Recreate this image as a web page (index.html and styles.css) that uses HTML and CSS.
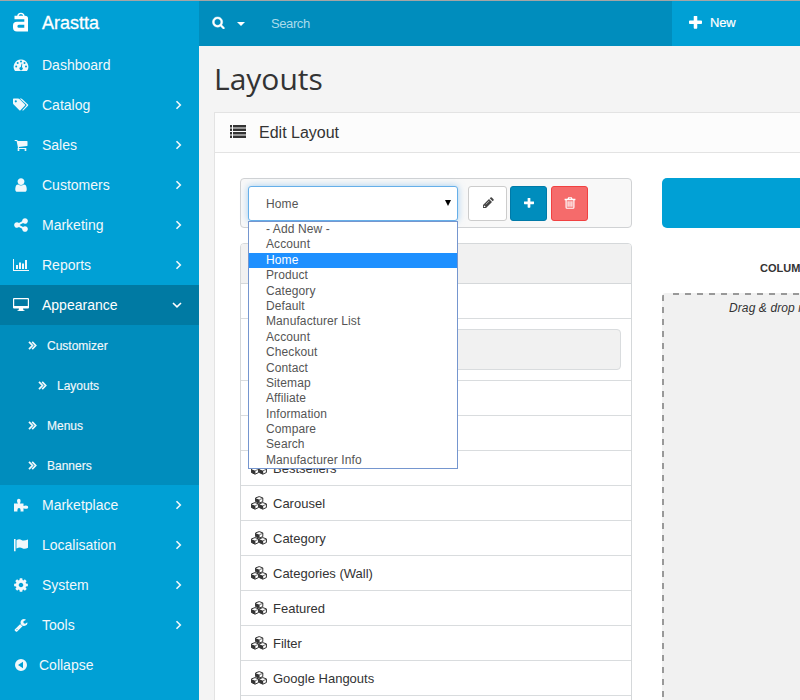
FILE: index.html
```html
<!DOCTYPE html>
<html lang="en">
<head>
<meta charset="utf-8">
<title>Layouts</title>
<link rel="stylesheet" href="styles.css">
</head>
<body>
<svg class="defs" aria-hidden="true">
<symbol id="brand" viewBox="0 0 18 20"><path d="M5.800 4.500C6 .3 11.800 .3 12 4.500" fill="none" stroke="currentColor" stroke-width="1.300"/><path d="M2.500 3.800H13Q16 3.800 16 6.500V19.500H5Q1 19.500 1 15.500V13.500Q1 9.800 5 9.800H12.300V7.200H2.500ZM6.800 12.800Q5.400 12.800 5.400 14.300T6.800 15.800H12.300V12.800Z" fill-rule="evenodd"/></symbol>
<symbol id="dash" viewBox="0 0 16 16"><path fill-rule="evenodd" d="M8 2.500A7.300 7.300 0 0 0 2 14H14A7.300 7.300 0 0 0 8 2.500ZM2.200 9.500a1 1 0 1 0 2 0a1 1 0 1 0-2 0ZM3.700 6a1 1 0 1 0 2 0a1 1 0 1 0-2 0ZM7 4.500a1 1 0 1 0 2 0a1 1 0 1 0-2 0ZM10.500 6a1 1 0 1 0 2 0a1 1 0 1 0-2 0ZM12 9.500a1 1 0 1 0 2 0a1 1 0 1 0-2 0ZM8.600 6.500 9.300 6.700 8.900 10.200A1.600 1.600 0 1 1 7.800 10Z"/></symbol>
<symbol id="tags" viewBox="0 0 16 14"><path fill-rule="evenodd" d="M0 1.200Q0 .5.700.5H5Q6 .5 6.700 1.200L12 6.500Q12.500 7 12 7.600L7.500 12.200Q7 12.700 6.300 12.200L.7 6.600Q0 6 0 5ZM1.700 3.300a1.100 1.100 0 1 0 2.200 0a1.100 1.100 0 1 0-2.200 0Z"/><path d="M6.700.5H8Q8.700.5 9.400 1.200L15 6.600Q15.600 7.100 15 7.700L10.500 12.300Q9.900 12.800 9.200 12.200L13.300 7.700Q13.800 7.100 13.300 6.600Z"/></symbol>
<symbol id="cart" viewBox="0 0 1792 1792"><path d="M704 1536q0 52-38 90t-90 38-90-38-38-90 38-90 90-38 90 38 38 90zm896 0q0 52-38 90t-90 38-90-38-38-90 38-90 90-38 90 38 38 90zm128-1088v512q0 24-16.500 42.500t-40.500 21.500l-1044 122q13 60 13 70 0 16-24 64h920q26 0 45 19t19 45-19 45-45 19h-1024q-26 0-45-19t-19-45q0-11 8-31.500t16-36 21.500-40 15.500-29.500l-177-823h-204q-26 0-45-19t-19-45 19-45 45-19h256q16 0 28.500 6.500t19.500 15.500 13 24.500 8 26 5.500 29.500 4.500 26h1201q26 0 45 19t19 45z"/></symbol>
<symbol id="user" viewBox="0 0 1792 1792"><path d="M1536 1399q0 109-62.500 187t-150.500 78h-854q-88 0-150.500-78t-62.500-187q0-85 8.500-160.500t31.500-152 58.500-131 94-89 134.500-34.500q131 128 313 128t313-128q76 0 134.500 34.500t94 89 58.500 131 31.500 152 8.500 160.500zm-256-887q0 159-112.500 271.500t-271.500 112.500-271.500-112.500-112.500-271.500 112.500-271.500 271.500-112.500 271.500 112.500 112.500 271.500z"/></symbol>
<symbol id="share" viewBox="0 0 1792 1792"><path d="M1344 1024q133 0 226.500 93.500t93.500 226.500-93.500 226.500-226.500 93.500-226.500-93.500-93.500-226.500q0-12 2-34l-360-180q-92 86-218 86-133 0-226.500-93.500t-93.500-226.500 93.500-226.500 226.500-93.500q126 0 218 86l360-180q-2-22-2-34 0-133 93.500-226.500t226.500-93.500 226.500 93.500 93.500 226.500-93.500 226.500-226.500 93.500q-126 0-218-86l-360 180q2 22 2 34t-2 34l360 180q92-86 218-86z"/></symbol>
<symbol id="chart" viewBox="0 0 16 14"><path d="M0 1H1V12H16V13H0ZM3 7H5V11H3ZM6 4.500H8V11H6ZM9 5.500H11V11H9ZM12 2H14V11H12Z"/></symbol>
<symbol id="desktop" viewBox="0 0 16 14"><path fill-rule="evenodd" d="M1 0H15Q16 0 16 1V9.500Q16 10.500 15 10.500H10L10.500 12.300H11.500V13H4.500V12.300H5.500L6 10.500H1Q0 10.500 0 9.500V1Q0 0 1 0ZM1.200 1.200V8H14.800V1.200Z"/></symbol>
<symbol id="puzzle" viewBox="0 0 16 16"><path d="M1 6.500H5Q4 5.200 4 3.700Q4 1.800 5.800 1.800T7.600 3.700Q7.600 5.200 6.800 6.500H10.500V9Q12.500 8.200 14 8.700Q15.200 9.100 15.200 10.200T14 11.700Q12.500 12.200 10.500 11.200V14.500H7.500Q8 11 6 11T4.500 14.500H1Z"/></symbol>
<symbol id="flag" viewBox="0 0 16 16"><path d="M0 1H1.800V15H0ZM2.800 2.500Q6 .8 8.500 2.200T16 1.700V11Q12.500 13 9.500 11.600T2.800 12Z"/></symbol>
<symbol id="cog" viewBox="0 0 1792 1792"><path d="M1152 896q0-106-75-181t-181-75-181 75-75 181 75 181 181 75 181-75 75-181zm512-109v222q0 12-8 23t-20 13l-185 28q-19 54-39 91 35 50 107 138 10 12 10 25t-9 23q-27 37-99 108t-94 71q-12 0-26-9l-138-108q-44 23-91 38-16 136-29 186-7 28-36 28h-222q-14 0-24.500-8.500t-11.500-21.500l-28-184q-49-16-90-37l-141 107q-10 9-25 9-14 0-25-11-126-114-165-168-7-10-7-23 0-12 8-23 15-21 51-66.500t54-70.500q-27-50-41-99l-183-27q-13-2-21-12.500t-8-23.500v-222q0-12 8-23t19-13l186-28q14-46 39-92-40-57-107-138-10-12-10-24 0-10 9-23 26-36 98.500-107.500t94.500-71.500q13 0 26 10l138 107q44-23 91-38 16-136 29-186 7-28 36-28h222q14 0 24.500 8.500t11.500 21.500l28 184q49 16 90 37l142-107q9-9 24-9 13 0 25 10 129 119 165 170 7 8 7 22 0 12-8 23-15 21-51 66.500t-54 70.500q26 50 41 98l183 28q13 2 21 12.500t8 23.500z"/></symbol>
<symbol id="wrench" viewBox="0 0 1792 1792"><path d="M448 1472q0-26-19-45t-45-19-45 19-19 45 19 45 45 19 45-19 19-45zm644-420l-682 682q-37 37-90 37-52 0-91-37l-106-108q-38-36-38-90 0-53 38-91l681-681q39 98 114.500 173.500t173.500 114.500zm634-435q0 39-23 106-47 134-164.500 217.500t-258.500 83.500q-185 0-316.500-131.500t-131.500-316.500 131.500-316.500 316.500-131.500q58 0 121.500 16.500t107.500 46.500q16 11 16 28t-16 28l-293 169v224l193 107q5-3 79-48.500t135.500-81 70.500-35.500q15 0 23.500 10t8.500 25z"/></symbol>
<symbol id="collapse" viewBox="0 0 16 16"><path fill-rule="evenodd" d="M2 8a6 6 0 1 0 12 0a6 6 0 1 0-12 0ZM5 8 10 4.800V11.200Z"/></symbol>
<symbol id="right" viewBox="0 0 8 10"><path d="M1.500 1.200 5.300 5 1.500 8.800" fill="none" stroke="currentColor" stroke-width="1.600"/></symbol>
<symbol id="down" viewBox="0 0 10 8"><path d="M1 2 5 5.800 9 2" fill="none" stroke="currentColor" stroke-width="1.600"/></symbol>
<symbol id="double" viewBox="0 0 9 9"><path d="M1 .8 4.500 4.500 1 8.200M4.200.8 7.700 4.500 4.200 8.200" fill="none" stroke="currentColor" stroke-width="1.700"/></symbol>
<symbol id="search" viewBox="0 0 1792 1792"><path stroke="currentColor" stroke-width="60" d="M1216 832q0-185-131.500-316.500t-316.500-131.500-316.500 131.500-131.500 316.500 131.500 316.500 316.500 131.500 316.500-131.500 131.500-316.500zm512 832q0 52-38 90t-90 38q-54 0-90-38l-343-342q-179 124-399 124-143 0-273.500-55.500t-225-150-150-225-55.500-273.500 55.500-273.500 150-225 225-150 273.500-55.500 273.500 55.500 225 150 150 225 55.500 273.500q0 220-124 399l343 343q37 37 37 90z"/></symbol>
<symbol id="plus" viewBox="192 160 1408 1408"><path d="M1600 736v192q0 40-28 68t-68 28h-416v416q0 40-28 68t-68 28h-192q-40 0-68-28t-28-68v-416h-416q-40 0-68-28t-28-68v-192q0-40 28-68t68-28h416v-416q0-40 28-68t68-28h192q40 0 68 28t28 68v416h416q40 0 68 28t28 68z"/></symbol>
<symbol id="list" viewBox="0 0 16 13"><path d="M0 0H2V2.400H0ZM0 3.500H2V5.900H0ZM0 7.100H2V9.500H0ZM0 10.600H2V13H0ZM3 0H16V2.400H3ZM3 3.500H16V5.900H3ZM3 7.100H16V9.500H3ZM3 10.600H16V13H3Z"/></symbol>
<symbol id="pencil" viewBox="0 0 12 12"><path fill-rule="evenodd" d="M1 8 7 2 10 5 4 11H1ZM1.900 8.700V10.100H3.200L3.600 9.700 2.300 8.400ZM3.600 7.300 3.900 7.600 7.400 4.100 7.100 3.800ZM7.700 1.300 8.600.5Q9.200 0 9.800.5L11.500 2.200Q12 2.800 11.500 3.400L10.700 4.300Z"/></symbol>
<symbol id="trash" viewBox="0 0 11 12"><path fill-rule="evenodd" d="M3 1.800 3.700 .2H7.300L8 1.800H10.900V3.200H10V10.200Q10 11.800 8.600 11.800H2.400Q1 11.800 1 10.200V3.200H.1V1.800ZM4.400 1.800H6.600L6.300 1.200H4.700ZM2.200 3.200V10.700H8.800V3.200ZM3 4.200H4.200V9.700H3ZM4.900 4.200H6.100V9.700H4.900ZM6.800 4.200H8V9.700H6.800Z"/></symbol>
<symbol id="cubes" viewBox="0 0 16 14"><g id="cube"><path d="M8.200 .6 11.800 1.900V5.500L8.200 7.200 4.600 5.500V1.900Z" fill="#fff" stroke="currentColor" stroke-width="1"/><path d="M4.600 2.300 8.600 3.700V7.200L4.600 5.500Z"/><path d="M8.400 3.700 11.800 2.300" stroke="currentColor" stroke-width=".7"/></g><use href="#cube" x="-4.200" y="6"/><use href="#cube" x="3.600" y="6"/></symbol>
</svg>
<div class="app">
<aside class="sidebar">
<div class="brand"><svg class="logo"><use href="#brand"/></svg><span>Arastta</span></div>
<nav>
<a class="item"><svg class="icon"><use href="#dash"/></svg><span>Dashboard</span></a>
<a class="item"><svg class="icon"><use href="#tags"/></svg><span>Catalog</span><svg class="arrow"><use href="#right"/></svg></a>
<a class="item"><svg class="icon small"><use href="#cart"/></svg><span>Sales</span><svg class="arrow"><use href="#right"/></svg></a>
<a class="item"><svg class="icon"><use href="#user"/></svg><span>Customers</span><svg class="arrow"><use href="#right"/></svg></a>
<a class="item"><svg class="icon"><use href="#share"/></svg><span>Marketing</span><svg class="arrow"><use href="#right"/></svg></a>
<a class="item"><svg class="icon"><use href="#chart"/></svg><span>Reports</span><svg class="arrow"><use href="#right"/></svg></a>
<a class="item active"><svg class="icon"><use href="#desktop"/></svg><span>Appearance</span><svg class="arrow down"><use href="#down"/></svg></a>
<div class="submenu">
<a class="sub"><svg class="chev"><use href="#double"/></svg><span>Customizer</span></a>
<a class="sub nested"><svg class="chev"><use href="#double"/></svg><span>Layouts</span></a>
<a class="sub"><svg class="chev"><use href="#double"/></svg><span>Menus</span></a>
<a class="sub"><svg class="chev"><use href="#double"/></svg><span>Banners</span></a>
</div>
<a class="item"><svg class="icon"><use href="#puzzle"/></svg><span>Marketplace</span><svg class="arrow"><use href="#right"/></svg></a>
<a class="item"><svg class="icon small"><use href="#flag"/></svg><span>Localisation</span><svg class="arrow"><use href="#right"/></svg></a>
<a class="item"><svg class="icon"><use href="#cog"/></svg><span>System</span><svg class="arrow"><use href="#right"/></svg></a>
<a class="item"><svg class="icon small"><use href="#wrench"/></svg><span>Tools</span><svg class="arrow"><use href="#right"/></svg></a>
<a class="item collapse"><svg class="icon"><use href="#collapse"/></svg><span>Collapse</span></a>
</nav>
</aside>
<div class="page">
<header class="topbar">
<div class="searchbox"><svg class="mag"><use href="#search"/></svg><i class="caret"></i><span>Search</span></div>
<div class="new"><svg class="plus"><use href="#plus"/></svg><span>New</span></div>
</header>
<h1>Layouts</h1>
<section class="panel">
<div class="panel-head"><svg class="list-icon"><use href="#list"/></svg><h2>Edit Layout</h2></div>
<div class="panel-body">
<div class="left">
<div class="toolbar">
<div class="select"><span>Home</span><i class="triangle"></i>
<div class="options">
<div>- Add New -</div><div>Account</div><div class="selected">Home</div><div>Product</div><div>Category</div><div>Default</div><div>Manufacturer List</div><div>Account</div><div>Checkout</div><div>Contact</div><div>Sitemap</div><div>Affiliate</div><div>Information</div><div>Compare</div><div>Search</div><div>Manufacturer Info</div>
</div>
</div>
<div class="btn edit"><svg><use href="#pencil"/></svg></div>
<div class="btn add"><svg><use href="#plus"/></svg></div>
<div class="btn delete"><svg><use href="#trash"/></svg></div>
</div>
<div class="modules">
<div class="modules-head"></div>
<div class="row"></div>
<div class="filter"><div class="field"></div></div>
<div class="row"></div>
<div class="row"></div>
<div class="row"><svg><use href="#cubes"/></svg><span>Bestsellers</span></div>
<div class="row"><svg><use href="#cubes"/></svg><span>Carousel</span></div>
<div class="row"><svg><use href="#cubes"/></svg><span>Category</span></div>
<div class="row"><svg><use href="#cubes"/></svg><span>Categories (Wall)</span></div>
<div class="row"><svg><use href="#cubes"/></svg><span>Featured</span></div>
<div class="row"><svg><use href="#cubes"/></svg><span>Filter</span></div>
<div class="row"><svg><use href="#cubes"/></svg><span>Google Hangouts</span></div>
<div class="row"></div>
</div>
</div>
<div class="right">
<div class="banner"></div>
<div class="column-title">COLUMN LEFT</div>
<div class="dropzone">Drag &amp; drop modules here</div>
</div>
</div>
</section>
</div>
</div>
</body>
</html>
```
FILE: styles.css
```css
* { box-sizing: border-box; }
body { margin: 0; width: 800px; height: 700px; overflow: hidden; background: #f4f4f4; color: #333; font: 13px "Liberation Sans", Arial, sans-serif; }
svg { fill: currentColor; flex: none; }
.defs { display: none; }
.app { display: flex; height: 700px; border-top: 1px solid #a5a5a5; overflow: hidden; }
.sidebar { width: 199px; flex: none; background: #00a0d5; color: #f2f8fb; }
.brand { height: 44px; display: flex; align-items: center; padding-left: 12px; color: #fff; font-size: 18px; line-height: 22px; -webkit-text-stroke: .3px #fff; }
.brand span { margin-left: 12px; }
.logo { width: 18px; height: 20px; margin-top: -3px; }
.item { height: 40px; display: flex; align-items: center; padding: 0 16px 0 13px; font-size: 14px; }
.item span { margin-left: 13px; flex: 1; }
.icon { width: 16px; height: 16px; }
.icon.small { width: 14px; height: 14px; margin: 0 1px; }
.arrow { width: 8px; height: 10px; }
.arrow.down { width: 10px; height: 8px; margin-right: 1px; }
.active { background: #007aa3; color: #fff; }
.collapse span { margin-left: 10px; }
.submenu { background: #008dbd; }
.sub { height: 40px; display: flex; align-items: center; padding: 1px 0 0 28px; font-size: 12px; -webkit-text-stroke: .15px currentColor; }
.sub span { margin-left: 10px; }
.sub.nested { padding-left: 38px; }
.chev { width: 9px; height: 9px; }
.page { width: 601px; flex: none; }
.topbar { height: 45px; display: flex; background: #008dbd; color: #fff; }
.searchbox { width: 473px; display: flex; align-items: center; padding-left: 13px; }
.mag { width: 13px; height: 13px; margin-top: -3px; }
.caret { margin-left: 12px; border: 4px solid transparent; border-top-color: #fff; border-bottom: 0; }
.searchbox span { margin-left: 26px; color: #a9dbeb; letter-spacing: -.4px; }
.new { flex: 1; display: flex; align-items: center; background: #00a0d5; padding: 0 0 2px 17px; }
.plus { width: 13px; height: 13px; }
.new span { margin-left: 8px; font-size: 13px; letter-spacing: -.2px; -webkit-text-stroke: .2px #fff; }
h1 { margin: 10px 0 0 15px; height: 56px; font: 400 30px/46px "Open Sans", sans-serif; }
.panel { margin-left: 15px; height: 600px; border: 1px solid #e3e3e3; border-right: 0; background: #fff; }
.panel-head { height: 40px; display: flex; align-items: center; padding-left: 15px; background: #fcfcfc; border-bottom: 1px solid #e3e3e3; }
.list-icon { width: 16px; height: 13px; margin-top: -2px; }
h2 { margin: 0 0 0 13px; font-size: 16px; font-weight: 400; }
.panel-body { display: flex; padding: 25px 0 0 25px; }
.left { width: 392px; flex: none; }
.toolbar { height: 50px; display: flex; padding: 7px; background: #f8f8f8; border: 1px solid #d0d2d4; border-radius: 4px; }
.select { position: relative; width: 210px; height: 35px; display: flex; align-items: center; justify-content: space-between; padding: 0 6px 0 17px; border: 1px solid #66afe9; border-radius: 3px; background: #fff; color: #555; font-size: 12px; letter-spacing: .1px; box-shadow: 0 0 7px rgba(102,175,233,.6); margin-right: 10px; }
.triangle { border: 3.5px solid transparent; border-top: 6px solid #000; border-bottom: 0; margin-top: -2px; }
.options { position: absolute; z-index: 2; top: 34px; left: -1px; width: 210px; height: 248px; background: #fff; border: 1px solid #7596cf; line-height: 15.4px; }
.options div { padding-left: 17px; height: 15.4px; }
.options .selected { background: #1e90ff; color: #fff; }
.btn { width: 37px; height: 35px; display: flex; align-items: center; justify-content: center; border: 1px solid; border-radius: 3px; margin-right: 4px; }
.btn svg { width: 12px; height: 12px; margin-top: -2px; }
.edit { width: 39px; border-color: #ccc; background: #fff; margin-right: 3px; }
.edit svg { color: #444; }
.add { border-color: #007aa8; background: #008dbd; color: #fff; }
.add svg { width: 10px; height: 10px; }
.delete { border-color: #f14141; background: #f56b6b; color: #fff; }
.modules { margin-top: 15px; border: 1px solid #d5d8da; border-radius: 4px 4px 0 0; background: #fff; }
.modules-head { height: 40px; background: #f1f1f1; border-bottom: 1px solid #d5d8da; border-radius: 3px 3px 0 0; }
.row { height: 35px; display: flex; align-items: center; padding-left: 10px; border-bottom: 1px solid #d9dcde; }
.row svg { width: 16px; height: 14px; }
.row span { margin-left: 6px; }
.filter { height: 62px; padding: 10px; border-bottom: 1px solid #d9dcde; }
.field { height: 41px; border: 1px solid #d9dcde; border-radius: 4px; background: #f1f1f1; }
.right { width: 320px; flex: none; margin-left: 30px; }
.banner { height: 50px; border-radius: 5px; background: #00a0d5; }
.column-title { padding: 33px 0 0 98px; height: 65px; font-size: 11px; font-weight: 700; line-height: 14px; white-space: nowrap; }
.dropzone {
  height: 450px;
  border-radius: 4px;
  background:
    repeating-linear-gradient(90deg, #999 0 6px, #f1f1f1 6px 12px) 11px 0 / 100% 2px no-repeat,
    repeating-linear-gradient(#999 0 6px, #f1f1f1 6px 12px) 0 2px / 2px 100% no-repeat,
    #f1f1f1;
  padding: 8px 0 0 67px;
  font-size: 12px;
  font-style: italic;
  letter-spacing: .1px;
  white-space: nowrap;
}
```
